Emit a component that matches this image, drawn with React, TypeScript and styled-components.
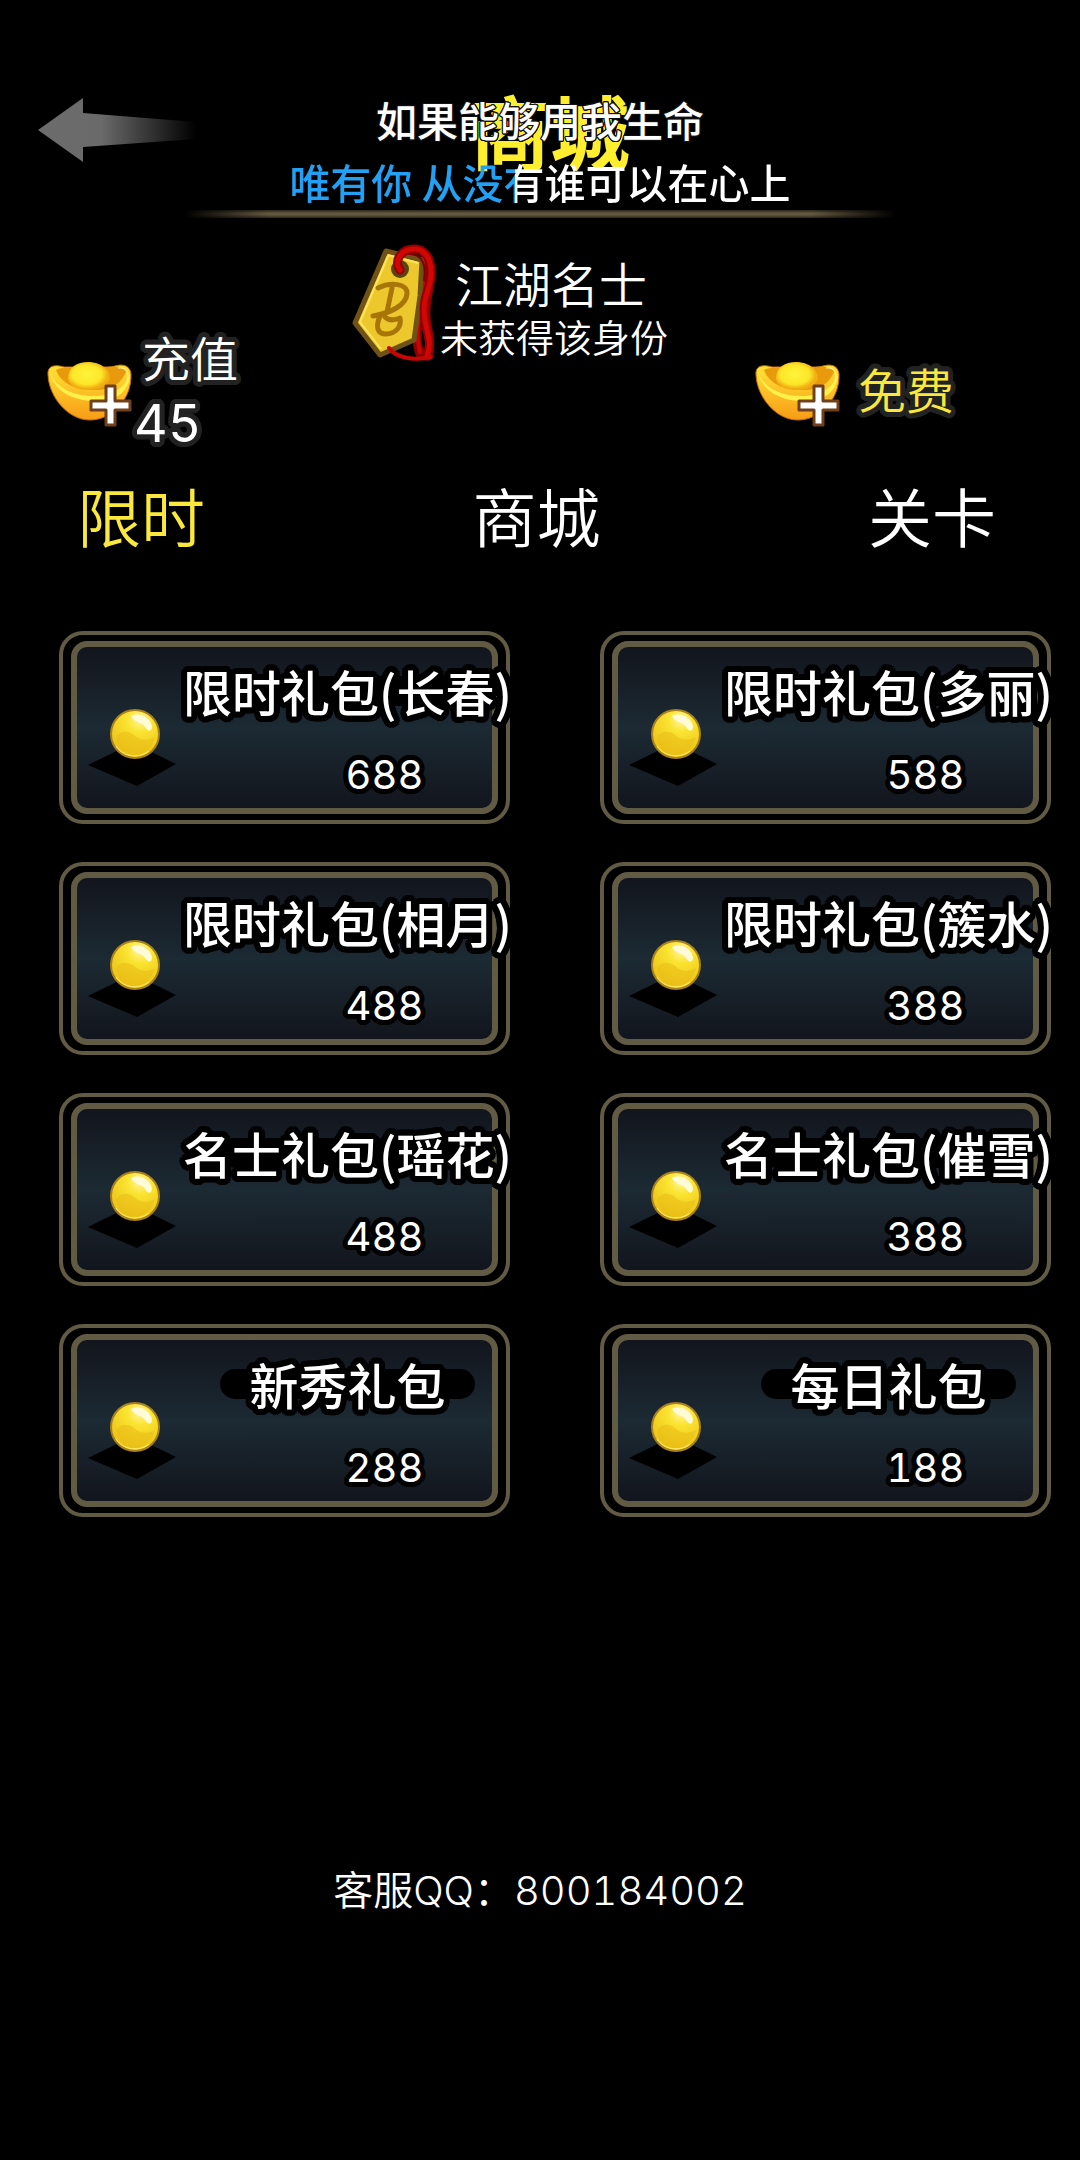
import React from "react";
import styled, { createGlobalStyle } from "styled-components";

const sans = `Inter, "Noto Sans CJK SC", sans-serif`;
const brush = `"Kaiti SC", KaiTi, "Noto Sans CJK SC", sans-serif`;

const GlobalStyle = createGlobalStyle`
  *, *::before, *::after { box-sizing: border-box; }
  body { margin: 0; background: #000; color: #fff; font-family: ${sans}; font-variant-numeric: tabular-nums; }
  button { margin: 0; padding: 0; border: 0; background: none; color: inherit; font: inherit; cursor: pointer; }
  h1, p { margin: 0; }
`;

/* Round outline: a ring of hard shadows around each glyph. */
const ring = (color: string, radius: number) =>
  [radius, radius / 2]
    .flatMap((r) =>
      Array.from({ length: 20 }, (_, i) => {
        const a = (i * Math.PI) / 10;
        return `${(Math.cos(a) * r).toFixed(1)}px ${(Math.sin(a) * r).toFixed(1)}px 0 ${color}`;
      })
    )
    .join(", ");

const Page = styled.div`
  display: flex;
  flex-direction: column;
  min-height: 100vh;
  background: #000;
`;

const Header = styled.header`
  position: relative;
  display: grid;
  grid-template-columns: 1fr auto 1fr;
  align-items: center;
  padding: 72px 36px 0;
`;

const BackButton = styled.button`
  justify-self: start;
  display: flex;
`;

const Title = styled.h1`
  padding-left: 20px;
  font-family: ${brush};
  font-size: 80px;
  font-weight: 700;
  line-height: 112px;
  color: #fdee30;
`;

const Rule = styled.div`
  height: 8px;
  margin: 26px 184px 0;
  background: linear-gradient(#2c261a, #64583f 40%, #64583f 60%, #2c261a);
  mask-image: linear-gradient(90deg, transparent, #000 12%, #000 88%, transparent);
`;

const Lyrics = styled.div`
  position: absolute;
  top: 88px;
  left: 0;
  right: 0;
  text-align: center;
  font-family: "Noto Sans CJK SC", sans-serif;
  font-size: 41px;
  font-weight: 500;
  line-height: 62px;
  pointer-events: none;
`;

const LyricLine = styled.p`
  text-shadow: ${ring("#111", 1)};
`;

const SungLine = styled.p<{ $progress: number }>`
  width: fit-content;
  margin: 0 auto;
  color: transparent;
  background: linear-gradient(90deg, #22a0f4 ${(p) => p.$progress}%, #fff ${(p) => p.$progress}%);
  background-clip: text;
`;

const Status = styled.section`
  display: flex;
  justify-content: center;
  gap: 4px;
  margin-top: 24px;
  padding-right: 60px;
`;

const StatusText = styled.div`
  display: flex;
  flex-direction: column;
  align-items: center;
  padding-top: 10px;
  font-family: "Noto Sans CJK SC", sans-serif;
  font-weight: 350;
`;

const Rank = styled.p`
  padding-right: 6px;
  font-size: 48px;
  line-height: 60px;
`;

const RankNote = styled.p`
  font-size: 38px;
  line-height: 48px;
`;

const Wallet = styled.section`
  display: flex;
  justify-content: space-between;
  align-items: center;
  margin-top: -36px;
  padding: 0 126px 0 46px;
`;

const WalletButton = styled.button<{ $gold?: boolean }>`
  display: flex;
  align-items: center;
  gap: ${(p) => (p.$gold ? 16 : 0)}px;
  color: ${(p) => (p.$gold ? "#fae83c" : "#fff")};
  font-size: 48px;
  font-weight: 350;
  line-height: 64px;
  text-shadow: ${ring("#222", 5)};
`;

const Balance = styled.span`
  display: flex;
  flex-direction: column;
`;

const Label = styled.span`
  padding-left: 8px;
`;

const Amount = styled.span`
  font-size: 52px;
  font-weight: 400;
  text-align: left;
`;

const Tabs = styled.nav`
  display: flex;
  justify-content: space-between;
  margin-top: 18px;
  padding: 0 84px 0 77px;
`;

const Tab = styled.button<{ $active?: boolean }>`
  color: ${(p) => (p.$active ? "#fae83c" : "#fff")};
  font-family: "Noto Sans CJK SC", sans-serif;
  font-size: 64px;
  font-weight: 350;
  line-height: 80px;
`;

const Goods = styled.main`
  display: grid;
  grid-template-columns: 1fr 1fr;
  gap: 38px 90px;
  margin-top: 77px;
  padding: 0 29px 0 59px;
`;

const Card = styled.button`
  display: flex;
  padding: 6px 8px;
  border: 4px solid #625b44;
  border-radius: 24px;
  background: #000;
`;

const CardBody = styled.span`
  flex: 1;
  display: grid;
  grid-template-columns: 116px 1fr;
  height: 173px;
  padding-left: 10px;
  border: 6px solid #625b44;
  border-radius: 16px;
  background: linear-gradient(#12151d, #1c2a33 50%, #12151d);
`;

const Coin = styled.svg`
  align-self: end;
  margin-bottom: 22px;
`;

const Info = styled.span`
  display: flex;
  flex-direction: column;
  align-items: center;
  justify-content: space-between;
  padding: 14px 0 8px;
`;

const Name = styled.span`
  display: flex;
  justify-content: center;
  width: 255px;
  margin: 15px 0;
  border-radius: 15px;
  background: #000;
  font-family: ${brush};
  font-size: 49px;
  font-weight: 500;
  line-height: 30px;
  white-space: nowrap;
  text-shadow: ${ring("#000", 6)};
`;

const Price = styled.span`
  padding-left: 74px;
  font-size: 40px;
  font-weight: 400;
  line-height: 50px;
  text-shadow: ${ring("#000", 5)};
`;

const Footer = styled.footer`
  margin-top: 344px;
  text-align: center;
  font-size: 40px;
  font-weight: 350;
  line-height: 60px;
`;

const BackArrow = () => (
  <svg width="160" height="72" viewBox="0 0 160 72" aria-hidden="true">
    <defs>
      <linearGradient id="fade">
        <stop offset="0" stopColor="#6c6c6c" />
        <stop offset=".4" stopColor="#6a6a6a" />
        <stop offset="1" stopColor="#6a6a6a" stopOpacity="0" />
      </linearGradient>
    </defs>
    <path d="M2 38 47 6V21L160 30V47L47 55V70Z" fill="url(#fade)" />
  </svg>
);

const Token = () => (
  <svg width="84" height="122" viewBox="12 6 84 122" aria-hidden="true">
    <g fill="none" strokeLinecap="round" strokeLinejoin="round">
      <path d="M84 24C86 44 84 62 80 80S76 106 80 118M88 26C94 48 84 62 86 82 88 98 92 106 88 120" stroke="#8d0000" strokeWidth="9" />
      <path d="M83 26C84 50 82 66 79 82S78 106 80 116" stroke="#c80404" strokeWidth="4" />
    </g>
    <path d="M46 15 82 24 80 60 74 104 40 119 15 87Z" fill="#edc82d" stroke="#6e5216" strokeWidth="5" strokeLinejoin="round" />
    <path d="M48 19 78 27M48 20 20 86 41 113" fill="none" stroke="#ffe45a" strokeWidth="2" />
    <circle cx="60" cy="33" r="9" fill="#5b4214" />
    <g fill="none" strokeLinecap="round" strokeLinejoin="round">
      <path d="M60 34C53 24 62 12 76 13 90 15 93 32 90 46S82 66 85 84 92 106 87 120" stroke="#930000" strokeWidth="9" />
      <path d="M60 34C53 24 62 12 76 13 90 15 93 32 90 46S82 66 85 84 92 106 87 120" stroke="#d30606" strokeWidth="5" />
      <path d="M49 112C56 122 74 125 91 121" stroke="#c80505" strokeWidth="4" />
      <path d="M70 18C84 18 86 32 84 44" stroke="#800000" strokeWidth="2" />
      <g stroke="#a87608" strokeWidth="5">
        <path d="M38 52C50 46 68 47 67 58 66 69 51 77 33 80" />
        <path d="M52 52 47 76M40 80C35 92 38 98 46 98 55 98 62 91 60 82 53 85 48 84 45 81" />
      </g>
    </g>
  </svg>
);

const Ingot = () => (
  <svg width="88" height="74" viewBox="0 -4 88 74" aria-hidden="true">
    <defs>
      <linearGradient id="hull" x2="0" y2="1">
        <stop offset="0" stopColor="#ffe437" />
        <stop offset="1" stopColor="#f89b16" />
      </linearGradient>
      <radialGradient id="dome" cx=".45" cy=".45">
        <stop offset="0" stopColor="#fff43a" />
        <stop offset=".7" stopColor="#fde62a" />
        <stop offset="1" stopColor="#f0ae12" />
      </radialGradient>
    </defs>
    <path d="M2 16C1 7 8 5 18 8L66 8C76 4 84 6 85 15 86 40 66 61 44 61 22 61 3 38 2 16Z" fill="url(#hull)" stroke="#c46b08" strokeWidth="1" />
    <path d="M4 13C10 30 29 37 48 37 67 37 80 28 84 14 84 28 76 36 66 40 38 47 8 36 4 13Z" fill="#fff14a" />
    <path d="M10 11C18 7 25 10 31 9H58C68 6 78 8 80 13 73 29 60 31 47 31 31 31 15 25 10 11Z" fill="#e99a0c" />
    <path d="M72 9C80 8 84 14 81 22" fill="none" stroke="#fff6b8" strokeWidth="1" />
    <path d="M22 20C22 8 31 3 42 3S64 9 64 20C60 28 52 31 42 31S24 28 22 20Z" fill="url(#dome)" />
    <path d="M60 27H69V42H84V51H69V66H60V51H45V42H60Z" fill="#fff" stroke="#70401c" strokeWidth="3" strokeLinejoin="round" />
  </svg>
);

const CoinIcon = () => (
  <Coin width="90" height="78" viewBox="0 0 90 78" aria-hidden="true">
    <defs>
      <radialGradient id="ball" cx=".6" cy=".2" r=".85">
        <stop offset="0" stopColor="#fff7a0" />
        <stop offset=".3" stopColor="#fbe432" />
        <stop offset="1" stopColor="#e8bd12" />
      </radialGradient>
    </defs>
    <path d="M1 57 46 35 89 56 50 78Z" fill="#000" />
    <circle cx="48" cy="26" r="24" fill="url(#ball)" stroke="#a8801c" strokeWidth="2" />
    <path d="M29 29C34 22 42 23 47 27 54 33 61 33 68 29 66 39 58 46 48 47 37 46 30 40 29 29Z" fill="#e9bc16" opacity=".55" />
    <path d="M29 38C36 49 52 51 62 43" fill="none" stroke="#fff07a" strokeWidth="1" />
    <path d="M44 8C52 4 63 9 65 18 65 24 61 24 58 19 54 13 47 15 44 8Z" fill="#fffbd8" />
  </Coin>
);

const goods = [
  ["限时礼包(长春)", 688],
  ["限时礼包(多丽)", 588],
  ["限时礼包(相月)", 488],
  ["限时礼包(簇水)", 388],
  ["名士礼包(瑶花)", 488],
  ["名士礼包(催雪)", 388],
  ["新秀礼包", 288],
  ["每日礼包", 188],
] as const;

export default function App() {
  return (
    <Page>
      <GlobalStyle />
      <Header>
        <BackButton aria-label="返回">
          <BackArrow />
        </BackButton>
        <Title>商城</Title>
        <Lyrics>
          <LyricLine>如果能够用我生命</LyricLine>
          <SungLine $progress={45}>唯有你 从没有谁可以在心上</SungLine>
        </Lyrics>
      </Header>
      <Rule />
      <Status>
        <Token />
        <StatusText>
          <Rank>江湖名士</Rank>
          <RankNote>未获得该身份</RankNote>
        </StatusText>
      </Status>
      <Wallet>
        <WalletButton>
          <Ingot />
          <Balance>
            <Label>充值</Label>
            <Amount>45</Amount>
          </Balance>
        </WalletButton>
        <WalletButton $gold>
          <Ingot />
          <span>免费</span>
        </WalletButton>
      </Wallet>
      <Tabs>
        <Tab $active>限时</Tab>
        <Tab>商城</Tab>
        <Tab>关卡</Tab>
      </Tabs>
      <Goods>
        {goods.map(([name, price]) => (
          <Card key={name}>
            <CardBody>
              <CoinIcon />
              <Info>
                <Name>{name}</Name>
                <Price>{price}</Price>
              </Info>
            </CardBody>
          </Card>
        ))}
      </Goods>
      <Footer>客服QQ：800184002</Footer>
    </Page>
  );
}
